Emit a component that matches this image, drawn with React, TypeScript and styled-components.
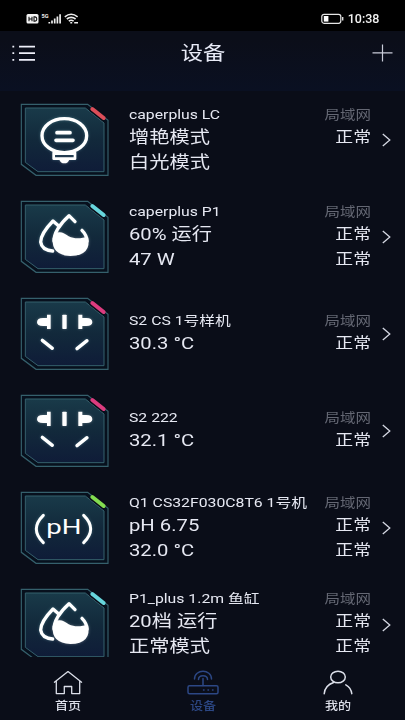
import React from "react";
import styled, { createGlobalStyle } from "styled-components";

const GlobalStyle = createGlobalStyle`
  * { box-sizing: border-box; }
  body { margin: 0; background: #0a0d19; }
`;

const Screen = styled.div`
  width: 405px;
  height: 720px;
  display: flex;
  flex-direction: column;
  overflow: hidden;
  background: #0a0d18;
  color: #e6e8f2;
  font-family: Roboto, "Noto Sans CJK SC", sans-serif;
`;

const StatusBar = styled.div`
  height: 31px;
  flex: none;
  background: #000;
  display: flex;
  justify-content: space-between;
  padding: 7px 26px 0 26px;
`;

const StatusGroup = styled.div`
  display: flex;
  align-items: center;
  height: 24px;
  gap: 5px;
`;

const Header = styled.header`
  height: 60px;
  flex: none;
  display: flex;
  justify-content: space-between;
  align-items: flex-start;
  padding: 11px 12px 0;
  background: linear-gradient(#0b0e19 15%, #0a1022 100%);
`;

const HeaderIcon = styled.svg`
  display: block;
`;

const Wide = styled.span<{ $size: number; $line: number; $stretch?: number; $origin?: string; $color?: string; $weight?: number }>`
  display: block;
  width: max-content;
  white-space: pre;
  font-size: ${(p) => p.$size}px;
  line-height: ${(p) => p.$line}px;
  font-weight: ${(p) => p.$weight ?? 400};
  color: ${(p) => p.$color ?? "inherit"};
  transform: scaleX(${(p) => p.$stretch ?? 1.19});
  transform-origin: ${(p) => p.$origin ?? "left"} center;
`;

const List = styled.main`
  flex: none;
  height: 566px;
  padding-top: 1px;
  overflow: hidden;
`;

const Row = styled.div`
  height: 96.9px;
  display: flex;
  align-items: center;
  padding: 0 14px 0 20px;
`;

const TileArt = styled.svg`
  flex: none;
  display: block;
  margin-right: 19px;
`;

const Info = styled.div`
  flex: 1;
  display: flex;
  justify-content: space-between;
  margin-top: -1px;
`;

const Column = styled.div<{ $end?: boolean }>`
  display: flex;
  flex-direction: column;
  align-items: ${(p) => (p.$end ? "flex-end" : "flex-start")};
`;

const Chevron = styled.svg`
  flex: none;
  margin-left: 11px;
`;

const TabBar = styled.nav`
  flex: 1;
  display: grid;
  grid-template-columns: repeat(3, 1fr);
  background: #0a0d18;
`;

const Tab = styled.div<{ $active?: boolean }>`
  display: flex;
  flex-direction: column;
  align-items: center;
  gap: 3px;
  padding-top: 12px;
  color: ${(p) => (p.$active ? "#2c4784" : "#dcdfe9")};
`;

type Kind = "bulb" | "water" | "socket" | "ph";

function Glyph({ kind }: { kind: Kind }) {
  if (kind === "bulb")
    return (
      <>
        <ellipse cx="163" cy="122" rx="67" ry="51" strokeWidth="10" />
        <path d="M141 113H180M138 136H189" strokeWidth="11" />
        <path d="M131 173V191H195V173M131 176H195" strokeWidth="8" />
        <path d="M148 194H178Q174 205 163 205Q152 205 148 194Z" fill="#fff" stroke="none" />
      </>
    );
  if (kind === "water")
    return (
      <>
        <path d="M147 103L129 87Q92 125 92 150Q95 174 128 177" strokeWidth="10" />
        <path d="M195 89L177 71Q132 112 132 147M216 115Q231 130 231 148" strokeWidth="10" />
        <path d="M128 139C140 112 158 119 176 133C199 144 218 137 234 134Q246 190 181 192Q124 190 128 139Z" fill="#fff" stroke="none" />
      </>
    );
  if (kind === "socket")
    return (
      <>
        <path d="M111 77H122V120H111V111H99Q81 111 81 100Q81 87 99 87H111Z" fill="#fff" stroke="none" />
        <path d="M205 77H217V87H229Q247 87 247 100Q247 111 229 111H217V120H205Z" fill="#fff" stroke="none" />
        <rect x="157" y="77" width="13" height="43" rx="2" fill="#fff" stroke="none" />
        <path d="M97 154L127 178M231 155L201 179" strokeWidth="10" />
      </>
    );
  return <path d="M100 97Q58 138 100 179M221 97Q263 138 221 179" strokeWidth="9" />;
}

function Tile({ kind, accent, id }: { kind: Kind; accent: string; id: string }) {
  return (
    <TileArt width="90" height="74" viewBox="30 24 270 222" fill="none">
      <defs>
        <linearGradient id={`fill-${id}`} x1="0" y1="0" x2="0" y2="1">
          <stop offset="0" stopColor="#193a49" />
          <stop offset="0.5" stopColor="#12293b" />
          <stop offset="1" stopColor="#0f1c38" />
        </linearGradient>
        <filter id={`glow-${id}`} x="-20%" y="-20%" width="140%" height="140%">
          <feGaussianBlur stdDeviation="5" />
        </filter>
      </defs>
      <path d="M34 28H233L294 76V241H78L34 208Z" fill="#07101d" stroke="#35606c" strokeWidth="3.5" />
      <path d="M46 39H226L282 84V230H84L46 202Z" fill={`url(#fill-${id})`} stroke="#35606d" strokeWidth="3" />
      <path d="M243 40L284 71" stroke="#0a0d18" strokeWidth="19" />
      <path d="M247 42L281 69" stroke={accent} strokeWidth="12" strokeLinecap="round" />
      <g stroke="#8fd0dc" strokeLinecap="round" strokeLinejoin="round" opacity="0.3" filter={`url(#glow-${id})`}>
        <Glyph kind={kind} />
      </g>
      <g stroke="#fff" strokeLinecap="round" strokeLinejoin="round">
        <Glyph kind={kind} />
      </g>
      {kind === "ph" && (
        <text x="0" y="0" transform="translate(109 153) scale(1.43 1)" fontFamily="Roboto, sans-serif" fontSize="58" fontWeight="400" fill="#fff">
          pH
        </text>
      )}
    </TileArt>
  );
}

interface Device {
  kind: Kind;
  accent: string;
  name: string;
  values: string[];
  states: string[];
}

const devices: Device[] = [
  { kind: "bulb", accent: "#dd4e59", name: "caperplus LC", values: ["增艳模式", "白光模式"], states: ["正常", " "] },
  { kind: "water", accent: "#67d5dc", name: "caperplus P1", values: ["60% 运行", "47 W"], states: ["正常", "正常"] },
  { kind: "socket", accent: "#dc3c7f", name: "S2 CS 1号样机", values: ["30.3 °C"], states: ["正常"] },
  { kind: "socket", accent: "#dc3c7f", name: "S2 222", values: ["32.1 °C"], states: ["正常"] },
  { kind: "ph", accent: "#83dc50", name: "Q1 CS32F030C8T6 1号机", values: ["pH 6.75", "32.0 °C"], states: ["正常", "正常"] },
  { kind: "water", accent: "#67d5dc", name: "P1_plus 1.2m 鱼缸", values: ["20档 运行", "正常模式"], states: ["正常", "正常"] },
];

export default function App() {
  return (
    <Screen>
      <GlobalStyle />
      <StatusBar>
        <StatusGroup>
          <svg width="54" height="14" viewBox="0 0 54 14">
            <rect x="0.5" y="2" width="12" height="9.6" rx="1.5" fill="#f4f4f4" />
            <path d="M3 4.7V9.3M6 4.7V9.3M3 7H6M8 4.9V9.1H9Q10.8 9 10.8 7T9 4.9Z" stroke="#111" strokeWidth="1.1" fill="none" />
            <text x="15.5" y="5.8" fontFamily="Roboto, sans-serif" fontSize="5.8" fontWeight="700" fill="#eee" textLength="7" lengthAdjust="spacingAndGlyphs">5G</text>
            <path d="M23.3 11.5V10M26 11.5V8.5M28.7 11.5V6.5M31.4 11.5V4.5M34.1 11.5V2.2" stroke="#eee" strokeWidth="1.7" />
            <g fill="none" stroke="#eee" strokeWidth="1.6">
              <path d="M38.8 4.8Q45.2 -0.2 51.6 4.8M40.8 7Q45.2 3.7 49.6 7M42.8 9.2Q45.2 7.4 47.6 9.2" />
              <path d="M44.3 10.8H46.2M48.2 10.8H52" strokeWidth="1.6" />
            </g>
          </svg>
        </StatusGroup>
        <StatusGroup>
          <svg width="23" height="12" viewBox="0 0 23 12">
            <rect x="0.8" y="1.3" width="19" height="9" rx="2.2" fill="none" stroke="#e6e6e6" strokeWidth="1.2" />
            <rect x="2.8" y="3" width="4.6" height="5.6" fill="#fff" />
            <path d="M21.7 4V7.6" stroke="#ddd" strokeWidth="1.4" />
          </svg>
          <Wide $size={12} $line={14} $stretch={1.04} $origin="right" $weight={500} $color="#f2f2f2">10:38</Wide>
        </StatusGroup>
      </StatusBar>

      <Header>
        <HeaderIcon width="24" height="22" viewBox="0 0 24 22" stroke="#eef0fa" strokeWidth="1.8">
          <path d="M0.4 4.7H2.2M7 4.7H23M0.4 11.2H2.2M7 11.2H23M0.4 17.9H2.2M7 17.9H23" />
        </HeaderIcon>
        <Wide $size={19} $line={24} $stretch={1.17} $origin="67%" $color="#e8ebf7">设备</Wide>
        <HeaderIcon width="21" height="22" viewBox="0 0 21 22" stroke="#c9ccd9" strokeWidth="1.2">
          <path d="M0.5 10.8H20.5M10.5 2.5V19.5" />
        </HeaderIcon>
      </Header>

      <List>
        {devices.map((d, i) => (
          <Row key={i}>
            <Tile kind={d.kind} accent={d.accent} id={String(i)} />
            <Info>
              <Column>
                <Wide $size={13} $line={20} $stretch={1.213}>{d.name}</Wide>
                {d.values.map((v, j) => (
                  <Wide key={j} $size={17} $line={25}>{v}</Wide>
                ))}
              </Column>
              <Column $end>
                <Wide $size={13} $line={20} $origin="right" $color="#646773">局域网</Wide>
                {d.states.map((s, j) => (
                  <Wide key={j} $size={15} $line={25} $origin="right">{s}</Wide>
                ))}
              </Column>
            </Info>
            <Chevron width="9" height="14" viewBox="0 0 9 14" fill="none" stroke="#d5d8e3" strokeWidth="1.3">
              <path d="M0.8 1L7.8 7L0.8 13" />
            </Chevron>
          </Row>
        ))}
      </List>

      <TabBar>
        <Tab>
          <svg width="30" height="26" viewBox="0 0 30 26" fill="none" stroke="currentColor" strokeWidth="1.3" strokeLinejoin="round" strokeLinecap="round">
            <path d="M1.4 13.2L15 2.6L28.6 13.2M3.3 12.3V24.6H11.3V17.5H18.7V24.6H26.7V12.3" />
          </svg>
          <Wide $size={11} $line={17} $origin="center" $weight={500}>首页</Wide>
        </Tab>
        <Tab $active>
          <svg width="32" height="26" viewBox="0 0 32 26" fill="none" stroke="currentColor" strokeWidth="1.5" strokeLinecap="round">
            <rect x="1" y="16.8" width="30" height="8" rx="1.5" />
            <path d="M16 9.5V16.5M11.5 10.5C11.5 5.4 20.5 5.4 20.5 10.5M7.5 10C7.5 -0.2 24.5 -0.2 24.5 10M16.5 21H17M21 21H21.5M25.5 21H26" />
          </svg>
          <Wide $size={11} $line={17} $origin="center" $weight={500}>设备</Wide>
        </Tab>
        <Tab>
          <svg width="30" height="26" viewBox="0 0 30 26" fill="none" stroke="currentColor" strokeWidth="1.5" strokeLinecap="round">
            <ellipse cx="15" cy="8" rx="7.3" ry="5.8" />
            <path d="M1.2 24.7Q2 16.3 10.6 13.5M22.8 15.8Q28 18.5 28.8 24.7" />
          </svg>
          <Wide $size={11} $line={17} $origin="center" $weight={500}>我的</Wide>
        </Tab>
      </TabBar>
    </Screen>
  );
}
